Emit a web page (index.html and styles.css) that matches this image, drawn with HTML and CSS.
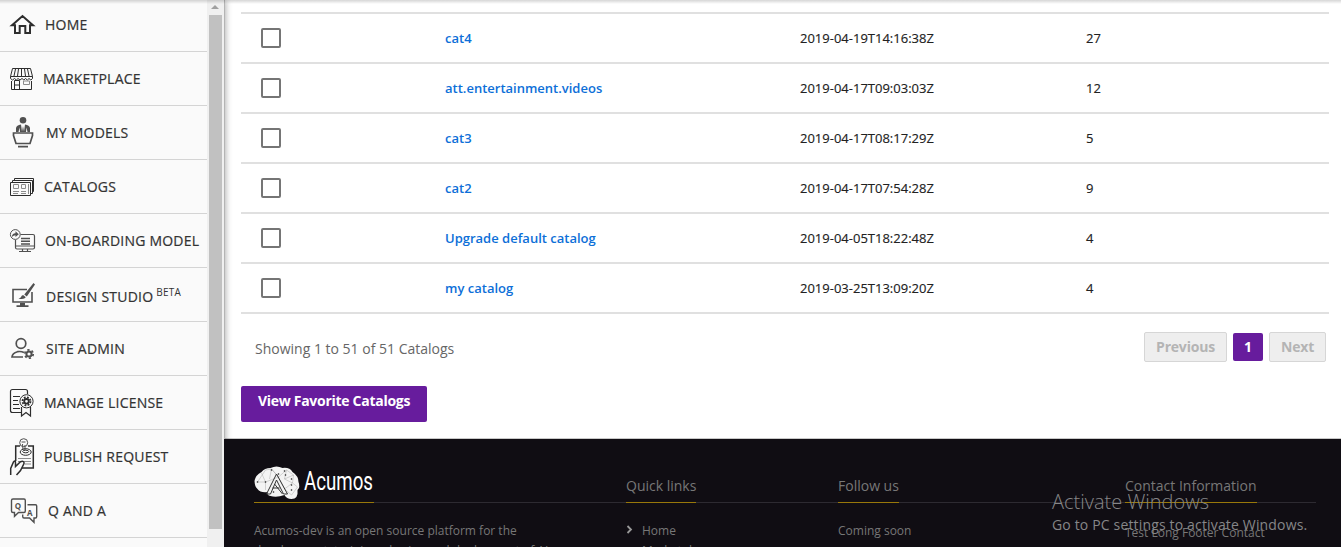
FILE: index.html
```html
<!DOCTYPE html>
<html lang="en">
<head>
<meta charset="utf-8">
<title>Catalogs</title>
<link rel="stylesheet" href="styles.css">
</head>
<body>
<div class="app">
  <aside class="sidebar">
    <nav class="nav">
      <a class="nav-item"><svg width="45" height="54" viewBox="0 0 45 54"><path class="dark" stroke-width="2" d="M12 27.2 22.5 18 33 27.2H30V35H25.3V28H19.7V35H15V27.2Z"/></svg><span>HOME</span></a>
      <a class="nav-item"><svg width="43" height="54" viewBox="0 0 43 54"><path class="dark" d="M12.5 16.5H30.500L32.500 24.500V26.500Q31 29.500 29 26.500Q27.500 29.500 25.500 26.500Q24 29.500 22 26.500Q20 29.500 18 26.500Q16.500 29.500 14.500 26.500Q12.500 29.500 10.500 26.500V24.500ZM10.500 24.500H32.500M15.500 17 14 24M18.500 17 17.500 24M21.500 17V24M24.500 17 25.500 24M27.500 17 29 24M11.500 29V37.500H31.500V29M14.500 37V28.500H19.500V37M15 33H19"/><path class="grey" d="M23.500 29H29.500V32.500H23.500Z"/></svg><span>MARKETPLACE</span></a>
      <a class="nav-item"><svg width="46" height="54" viewBox="0 0 46 54"><circle class="fill" cx="23" cy="14.300" r="3.300"/><path class="fill" d="M16 26V22Q16.500 19 21 18.500L22 25.500 23 20 24 25.500 25 18.500Q29.500 19 30 22V26H27.500L26.500 21.500 26 26H20L19.500 21.500 18.500 26ZM18 39.700H28V41.500H18Z"/><path class="mid" stroke-width="1.700" d="M13.500 27H32.500V29.500L30 37.500H16L13.500 29.500Z"/></svg><span>MY MODELS</span></a>
      <a class="nav-item"><svg width="44" height="54" viewBox="0 0 44 54"><path class="dark" d="M10.500 22.500H30.500V35.500H10.500ZM12.500 22V20.500H32.500V33.500H31M14.500 20V18.500H33.500V31.500H33"/><path class="grey" d="M13.500 24.500H18.500V28.500H13.500ZM21.500 24.500H25.500V28.500H21.500ZM13 31.500H19M13 33.500H18M21 31.500H26M21 33.500H26M28.500 24V34"/></svg><span>CATALOGS</span></a>
      <a class="nav-item"><svg width="45" height="54" viewBox="0 0 45 54"><path class="mid" stroke-width="1.200" d="M20.500 20.500H33Q34.500 20.500 34.500 22V33.500Q34.500 35 33 35H17Q15.500 35 15.500 33.500V26M15.500 32H34.500M19 37.500H31M22.500 35V37M27.500 35V37"/><path class="mid" stroke-width="1.500" d="M21 24.500H30M21 27.200H30M21 30H30"/><circle class="mid" cx="15.300" cy="20.500" r="4.900"/><path class="fill" d="M11.800 23Q12 19.500 15.500 19.200V17.200L18.800 20.300 15.500 23V21.300Q13.500 21.300 11.800 23Z"/></svg><span>ON-BOARDING MODEL</span></a>
      <a class="nav-item design"><svg width="46" height="54" viewBox="0 0 46 54"><path class="mid" stroke-width="1.600" d="M27 21.500H13V34H32V24"/><path class="fill" d="M20 35H25V37.300H28.500V39H16.500V37.300H20ZM33.500 15 35 16.500 26.800 28.500 24.300 26.500ZM23.500 27.300 25.800 29.300Q24 32 18.500 30.500 21 30 21.300 28.500 22 26.800 23.500 27.300Z"/></svg><span>DESIGN STUDIO <small class="beta">BETA</small></span></a>
      <a class="nav-item"><svg width="46" height="54" viewBox="0 0 46 54"><circle class="mid" cx="21" cy="21.500" r="4.800" stroke-width="1.700"/><path class="mid" stroke-width="1.700" d="M24 30.500Q21 29 17.500 29.700 12.300 31 12 35H23"/><circle class="mid" cx="29" cy="32" r="2.600" stroke-width="2"/><circle class="mid" cx="29" cy="32" r="4.200" stroke-width="1.700" stroke-dasharray="2.200 2.200"/></svg><span>SITE ADMIN</span></a>
      <a class="nav-item"><svg width="44" height="54" viewBox="0 0 44 54"><path class="dark" stroke-width="1.200" d="M27.500 18V15.500Q27.500 13.500 25.500 13.500H12.500Q10.500 13.500 10.500 15.500V34.500Q10.500 36.500 12.500 36.500H21M13 20.500H20M13 24.500H18M13 28.500H19M13 32.500H20M21.500 31V40L26 36.500 30.500 40V31"/><circle class="dark" cx="26.500" cy="25.300" r="6.600"/><circle class="dark" cx="26.500" cy="25.300" r="2.300" stroke-width="1.800"/><circle class="dark" cx="26.500" cy="25.300" r="4" stroke-width="1.800" stroke-dasharray="1.800 1.340"/></svg><span>MANAGE LICENSE</span></a>
      <a class="nav-item"><svg width="44" height="54" viewBox="0 0 44 54"><path class="dark" stroke-width="1.500" d="M20 16H15.700V31M28 16H33.300V38H22"/><circle class="mid" cx="23.700" cy="12.700" r="4"/><path class="mid" d="M22.500 14 23 20M25 15V20M21.500 12H25.500"/><ellipse class="dark" cx="25.700" cy="22" rx="5.500" ry="3.300"/><ellipse class="dark" cx="25.700" cy="21.500" rx="3" ry="1.300"/><path class="grey" d="M18 28.500H31M18 31.500H31M25 34H31"/><path class="dark" stroke-width="1.500" d="M10.700 45V38.500L13.500 32Q15.500 29.500 15.500 33V36.500L20.500 31.700Q24.500 30.500 24 33.500L20.500 40.500 16.500 45"/></svg><span>PUBLISH REQUEST</span></a>
      <a class="nav-item"><svg width="48" height="54" viewBox="0 0 48 54"><path class="mid" stroke-width="1.400" d="M13 15H24Q25.300 15 25.300 16.500V27Q25.300 28.500 24 28.500H18.500L14.500 32.300V28.500H13Q11.500 28.500 11.500 27V16.500Q11.500 15 13 15ZM27.500 20.700H35.500Q36.700 20.700 36.700 22V32.500Q36.700 34 35.500 34H34V38.300L29.500 34H24Q22.700 34 22.700 32.500V30.500"/><text class="glyph" x="14.700" y="24.500">Q</text><text class="glyph" x="27" y="31.700">A</text></svg><span>Q AND A</span></a>
      <div class="nav-item"></div>
    </nav>
    <div class="scrollbar"><i class="arrow"></i><i class="thumb"></i></div>
  </aside>
  <div class="page">
    <main class="content">
      <div class="table">
        <div class="row"><i class="box"></i><a>cat4</a><span>2019-04-19T14:16:38Z</span><span>27</span></div>
        <div class="row"><i class="box"></i><a>att.entertainment.videos</a><span>2019-04-17T09:03:03Z</span><span>12</span></div>
        <div class="row"><i class="box"></i><a>cat3</a><span>2019-04-17T08:17:29Z</span><span>5</span></div>
        <div class="row"><i class="box"></i><a>cat2</a><span>2019-04-17T07:54:28Z</span><span>9</span></div>
        <div class="row"><i class="box"></i><a>Upgrade default catalog</a><span>2019-04-05T18:22:48Z</span><span>4</span></div>
        <div class="row"><i class="box"></i><a>my catalog</a><span>2019-03-25T13:09:20Z</span><span>4</span></div>
      </div>
      <div class="pager">
        <span class="showing">Showing 1 to 51 of 51 Catalogs</span>
        <span class="page-btn prev">Previous</span><span class="page-btn current">1</span><span class="page-btn next">Next</span>
      </div>
      <div class="favorite">View Favorite Catalogs</div>
    </main>
    <footer class="footer">
      <div class="heads">
        <div class="head"><svg class="logo" width="120" height="39" viewBox="0 0 120 38"><g transform="translate(-.5 1)"><path fill="#f4f4f4" d="M1 16Q2 10 8 7 11 3 17 3 23 0 29 3 36 2 39 7 45 11 45 17 47 22 44 25 45 34 38 34 33 34 31 30 23 33 17 31 13 30 14 27 7 28 4 24 1 21 1 16Z"/><path class="mesh" d="M4 17 12 5 18 4 25 12 33 5 40 10 39 18 44 22 38 30 31 24 25 12 12 17 4 17M12 17 8 8M12 17 12 25M18 4 16 14M33 5 31 14 39 18 31 24M31 14 40 10M25 12 18 4"/><path fill="none" stroke="#333" d="M13 29 23 9 34 29H30L23 15 17 29ZM19 23H26M21 19 29 29"/><g fill="#222"><circle cx="4" cy="17" r=".8"/><circle cx="12" cy="17" r=".8"/><circle cx="18" cy="5" r=".8"/><circle cx="25" cy="9" r=".8"/><circle cx="31" cy="6" r=".8"/><circle cx="32" cy="10" r=".8"/><circle cx="38" cy="14" r=".8"/><circle cx="38" cy="20" r=".8"/><circle cx="38" cy="25" r=".8"/><circle cx="20" cy="27" r=".8"/></g></g><text class="brand" x="50" y="25.500" textLength="69" lengthAdjust="spacingAndGlyphs">Acumos</text></svg></div>
        <div class="head"><span>Quick links</span></div>
        <div class="head"><span>Follow us</span></div>
        <div class="head"><span>Contact Information</span></div>
      </div>
      <div class="cols">
        <p class="about">Acumos-dev is an open source platform for the development, training, sharing and deployment of AI models.</p>
        <ul class="links">
          <li><svg width="16" height="10" viewBox="0 0 16 10"><path d="M1.500 1 5 4.500 1.500 8" fill="none" stroke="#999" stroke-width="1.800"/></svg>Home</li>
          <li><svg width="16" height="10" viewBox="0 0 16 10"><path d="M1.500 3 5 6.500 1.500 10" fill="none" stroke="#999" stroke-width="1.800"/></svg>Marketplace</li>
        </ul>
        <p>Coming soon</p>
        <p class="contact">Test Long Footer Contact</p>
      </div>
    </footer>
  </div>
</div>
<div class="watermark"><div class="wm-title">Activate Windows</div><div class="wm-text">Go to PC settings to activate Windows.</div></div>
</body>
</html>
```

FILE: styles.css
```css
* { box-sizing: border-box; }
body { margin: 0; height: 547px; overflow: hidden; position: relative; font-family: "Open Sans", "Noto Sans", sans-serif; background: #fff; color: #333; }
body::before { content: ""; position: absolute; z-index: 3; top: 0; left: 0; right: 0; height: 4px; background: linear-gradient(rgba(0,0,0,.16), rgba(0,0,0,0)); }
.app { display: flex; height: 547px; overflow: hidden; }
.sidebar { display: flex; width: 224px; flex: none; background: #f0f0f0; z-index: 2; box-shadow: 1px 0 0 #b4b4b4, 2px 0 6px rgba(0,0,0,.3); overflow: hidden; height: 547px; }
.nav { width: 207px; flex: none; margin-top: -2px; background: #fafafa; }
.nav-item { display: flex; align-items: center; height: 54px; border-bottom: 1px solid #d4d4d4; font-size: 14px; letter-spacing: .22px; -webkit-text-stroke: .2px #333; white-space: nowrap; color: #333; }
.nav-item svg { flex: none; display: block; letter-spacing: 0; -webkit-text-stroke: 0; }
.design span { padding-top: 4px; }
.beta { font-size: 10px; margin-left: -1px; vertical-align: super; line-height: 0; letter-spacing: .3px; -webkit-text-stroke: 0; }
.dark, .mid, .grey { fill: none; stroke: #2d2d2d; }
.mid { stroke: #505050; }
.grey { stroke: #8c8c8c; }
.fill { fill: #505050; }
.glyph { font: 700 8px "Open Sans", sans-serif; fill: #505050; }
.scrollbar { width: 15px; display: flex; flex-direction: column; align-items: flex-end; background: #f0f0f0; }
.arrow { margin: 5px 3px 6px; border: 4px solid transparent; border-top: 0; border-bottom-color: #a0a0a0; }
.thumb { width: 13px; height: 514px; background: #c1c1c1; }
.page { flex: 1; display: flex; flex-direction: column; }
.content { height: 439px; padding: 12px 12px 0 17px; border-bottom: 1px solid #c8c8c8; flex: none; }
.table { border-top: 2px solid #e0e0e0; }
.row { display: grid; grid-template-columns: 184px 355px 286px 1fr; align-items: center; height: 50px; padding-left: 20px; border-bottom: 2px solid #e0e0e0; font-size: 13px; color: #212121; }
.row span { -webkit-text-stroke: .15px #212121; }
.row a { color: #0d6fd8; font-weight: 600; }
.box { width: 20px; height: 20px; border: 2px solid #757575; border-radius: 2px; }
.pager { display: flex; align-items: center; height: 30px; margin-top: 18px; padding: 0 3px 0 14px; font-size: 14px; }
.showing { flex: 1; color: #666; padding-top: 2px; }
.page-btn { display: flex; align-items: center; justify-content: center; height: 30px; padding-bottom: 2px; font-weight: 700; letter-spacing: -.2px; background: #eee; color: #b4b4b4; border: 1px solid #d6d6d6; border-radius: 2px; }
.prev { width: 83px; }
.current { width: 30px; height: 28px; margin: 0 6px; padding-bottom: 1px; background: #671c9d; color: #fff; border: 0; }
.next { width: 57px; }
.favorite { width: 186px; height: 36px; margin-top: 24px; padding-top: 5px; background: #671c9d; color: #fff; border-radius: 2px; font-size: 14px; font-weight: 700; line-height: 20px; text-align: center; letter-spacing: -.28px; }
.footer { position: relative; z-index: 3; flex: 1; background: #100d13; color: #777; padding: 0 25px 0 30px; }
.heads, .cols { display: grid; grid-template-columns: 372px 212px 287px 1fr; }
.heads { height: 64px; border-bottom: 1px solid #2d2a31; align-items: end; font-size: 14px; }
.head { display: flex; height: 38px; }
.head > * { flex: none; height: 39px; line-height: 43px; border-bottom: 1px solid #98780a; }
.mesh { fill: none; stroke: #999; stroke-width: .4; }
.brand { font: 400 25px Roboto, sans-serif; fill: #fff; }
.cols { padding-top: 18px; font-size: 12px; line-height: 20px; }
.cols p, .cols ul { margin: 0; padding: 0; list-style: none; }
.about { width: 310px; }
.cols .contact { padding-top: 2px; }
.watermark { position: absolute; z-index: 5; left: 1052px; top: 489px; color: #868688; white-space: nowrap; }
.wm-title { font-size: 20px; line-height: 26px; font-weight: 300; }
.wm-text { font-size: 14px; line-height: 20px; letter-spacing: .16px; }
```
